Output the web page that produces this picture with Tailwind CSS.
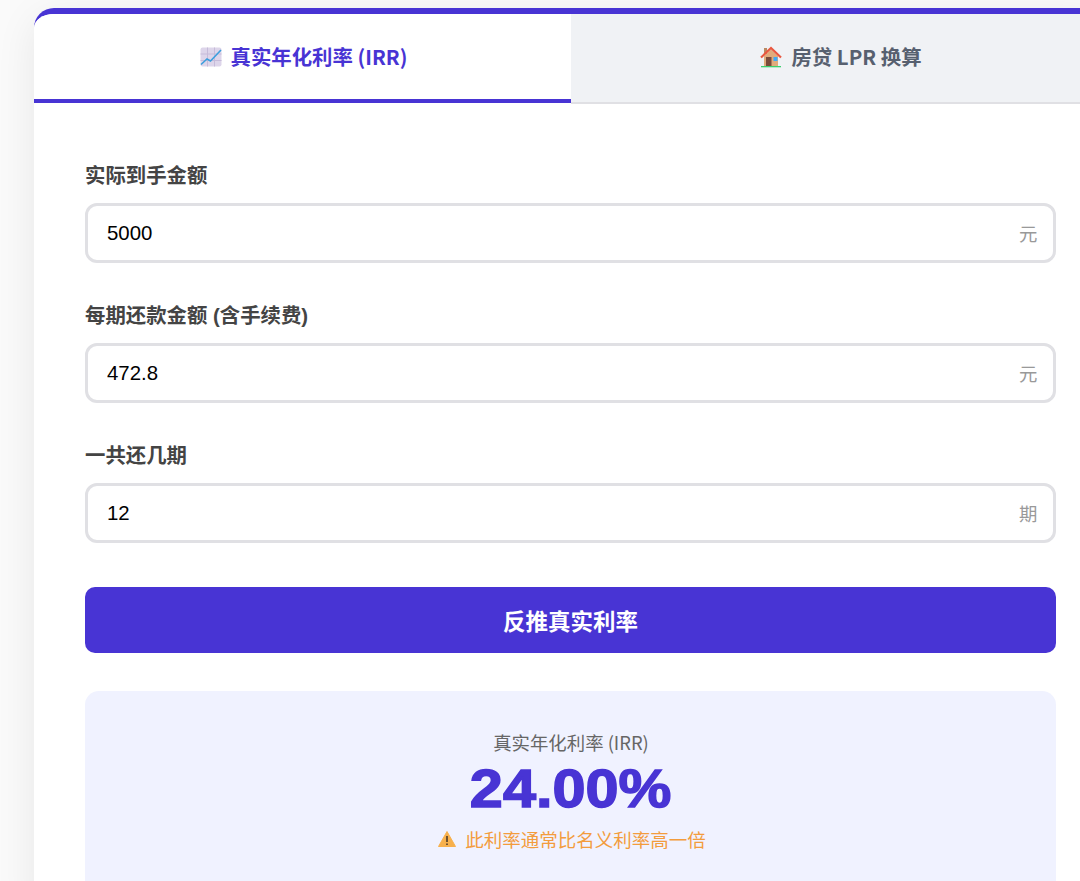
<!DOCTYPE html>
<html lang="zh-CN">
<head>
<meta charset="utf-8">
<title>真实年化利率</title>
<script src="https://cdn.jsdelivr.net/npm/@tailwindcss/browser@4"></script>
</head>
<body class="h-[881px] w-[1080px] overflow-hidden bg-[#fafafa] font-['Liberation_Sans','Noto_Sans_CJK_SC',sans-serif]">
  <div class="pt-2 pl-[34px]">
    <div class="w-[1074px] h-[900px] overflow-hidden rounded-t-[20px] border-t-[6px] border-[#4834d4] bg-white shadow-[0_10px_40px_rgba(0,0,0,0.08)]">

      <!-- Tabs -->
      <div class="flex h-[90px] items-start font-['Noto_Sans_CJK_SC','Noto_Sans',sans-serif] text-[20.4px] font-bold">
        <div class="flex h-[89px] w-[537px] items-center justify-center gap-[9px] border-b-4 border-[#4834d4] bg-white pb-[1px] pl-[2px] text-[#4834d4]">
          <svg class="mt-[1px] h-[22px] w-[22px]" viewBox="0 0 22 22">
            <rect x="0.5" y="1.5" width="21" height="19" rx="2" fill="#ddd5ea"/>
            <path d="M7.5 1.5v19M14.5 1.5v19M0.5 8h21M0.5 14.5h21" stroke="#c6bbd9" stroke-width="1"/>
            <path d="M1 18.5l6-5.5 3.5 2L21 4" fill="none" stroke="#3d9fdd" stroke-width="1.6"/>
          </svg>
          <span>真实年化利率 (IRR)</span>
        </div>
        <div class="flex h-[90px] w-[537px] items-center justify-center gap-[9px] border-b-2 border-[#e0e0e4] bg-[#f0f2f5] pb-[4px] pl-[3px] text-[#57606f]">
          <svg class="mt-[1px] h-[22px] w-[22px]" viewBox="0 0 22 22">
            <rect x="4" y="2" width="3" height="6" fill="#b98a63"/>
            <path d="M4 10L11 3.5 18 10V20H4z" fill="#e0ab7c"/>
            <path d="M1 11.5L11 2l10 9.500" fill="none" stroke="#e9573f" stroke-width="2.200"/>
            <rect x="6" y="11" width="5.500" height="9" fill="#7a4a3a"/>
            <rect x="13.500" y="11" width="4" height="4" fill="#3fa9f5"/>
            <rect x="1" y="20" width="20" height="1.300" fill="#3ecf6e"/>
          </svg>
          <span>房贷 LPR 换算</span>
        </div>
      </div>

      <!-- Form -->
      <div class="w-[1022px] pl-[51px]">
        <div class="flex flex-col gap-[37px] pt-[56px]">
          <div class="flex flex-col gap-[13px]">
            <label class="h-[30px] text-[20.4px] leading-[32px] font-bold text-[#444]">实际到手金额</label>
            <div class="flex h-[60px] items-center justify-between rounded-[12px] border-[3px] border-[#e0e0e4] pr-[15.5px] pl-[19px]">
              <input class="w-[800px] text-[20.4px] text-black outline-none" value="5000">
              <span class="pt-[3px] text-[18.400px] text-[#999]">元</span>
            </div>
          </div>
          <div class="flex flex-col gap-[13px]">
            <label class="h-[30px] text-[20.4px] leading-[32px] font-bold text-[#444]">每期还款金额 (含手续费)</label>
            <div class="flex h-[60px] items-center justify-between rounded-[12px] border-[3px] border-[#e0e0e4] pr-[15.5px] pl-[19px]">
              <input class="w-[800px] text-[20.4px] text-black outline-none" value="472.8">
              <span class="pt-[3px] text-[18.400px] text-[#999]">元</span>
            </div>
          </div>
          <div class="flex flex-col gap-[13px]">
            <label class="h-[30px] text-[20.4px] leading-[32px] font-bold text-[#444]">一共还几期</label>
            <div class="flex h-[60px] items-center justify-between rounded-[12px] border-[3px] border-[#e0e0e4] pr-[15.5px] pl-[19px]">
              <input class="w-[800px] text-[20.4px] text-black outline-none" value="12">
              <span class="pt-[3px] text-[18.400px] text-[#999]">期</span>
            </div>
          </div>
        </div>

        <button class="mt-[44px] h-[66px] w-full rounded-[10px] bg-[#4834d4] pt-[6px] text-[22.500px] font-bold text-white">反推真实利率</button>

        <!-- Result -->
        <div class="mt-[38px] flex h-[220px] flex-col items-center rounded-[14px] bg-[#f0f2ff] pt-[37px]">
          <div class="h-[28px] pl-[1px] font-['Noto_Sans_CJK_SC','Noto_Sans',sans-serif] text-[18.400px] leading-[28px] text-[#666]">真实年化利率 (IRR)</div>
          <div class="h-[62px] scale-x-[1.1] pt-[1px] text-[54px] leading-[62px] font-bold text-[#4834d4] [-webkit-text-stroke:1.5px_#4834d4]">24.00%</div>
          <div class="mt-[6px] flex h-[30px] items-center gap-[9px] pl-[3px] font-['Noto_Sans_CJK_SC','Noto_Sans',sans-serif] text-[18.500px] leading-[30px] text-[#f39c3d]">
            <svg class="h-[18px] w-[18px]" viewBox="0 0 18 18">
              <path d="M9 1.500L17.500 16.500H0.500z" fill="#f7b04c" stroke="#f7b04c" stroke-linejoin="round"/>
              <path d="M9 6v6M9 13.500v1.500" stroke="#4a3a2a" stroke-width="1.600"/>
            </svg>
            <span>此利率通常比名义利率高一倍</span>
          </div>
        </div>
      </div>
    </div>
  </div>
</body>
</html>
